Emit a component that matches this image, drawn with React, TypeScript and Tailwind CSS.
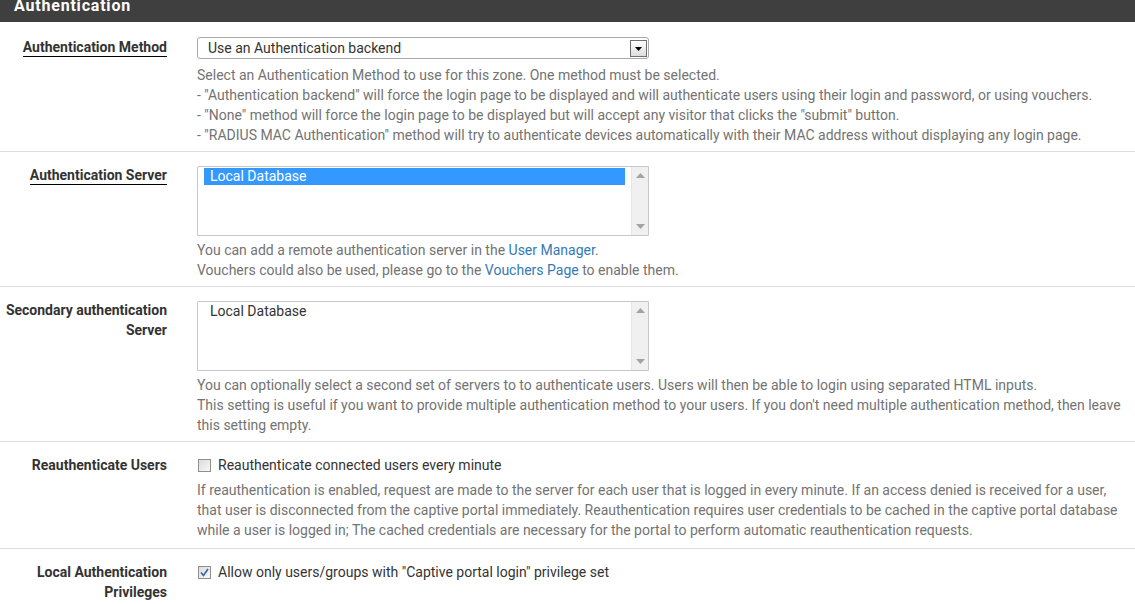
import React from "react";

const help = "text-[14px] leading-5 text-[#737373] whitespace-nowrap";
const link = "text-[#337ab7]";

function Label({ children, pt, underline }: { children: React.ReactNode; pt: string; underline?: boolean }) {
  return (
    <div className={`w-[167px] shrink-0 text-right text-[14px] leading-5 font-bold text-[#333] ${pt}`}>
      {underline ? <span className="border-b border-black pb-[1px]">{children}</span> : children}
    </div>
  );
}

function ScrollBar() {
  return (
    <div className="absolute right-0 top-0 bottom-0 w-[17px] bg-[#f0f0f0] border-l border-[#e6e6e6] flex flex-col justify-between items-center py-[6px]">
      <svg width="9" height="5" viewBox="0 0 9 5"><path d="M0 5 L4.5 0 L9 5 Z" fill="#a3a3a3" /></svg>
      <svg width="9" height="5" viewBox="0 0 9 5"><path d="M0 0 L4.5 5 L9 0 Z" fill="#a3a3a3" /></svg>
    </div>
  );
}

function ListBox({ selected }: { selected?: boolean }) {
  return (
    <div className="relative w-[452px] h-[70px] border border-[#c8c8c8] rounded-tl-[2px] bg-white">
      <div className="pl-[6px] pr-[23px] pt-[1px]">
        <div className={`h-[17px] leading-[17px] pl-[6px] text-[14px] ${selected ? "bg-[#3399ff] text-white" : "text-[#333]"}`}>
          Local Database
        </div>
      </div>
      <ScrollBar />
    </div>
  );
}

function CheckBox({ checked }: { checked?: boolean }) {
  return (
    <div className="w-[13px] h-[13px] border border-[#8f8f8f] bg-gradient-to-br from-[#dcdcdc] to-[#f8f8f8] flex items-center justify-center shrink-0">
      {checked && (
        <svg width="9" height="9" viewBox="0 0 9 9">
          <path d="M1 4.5 L3.5 7.5 L8 1" stroke="#3b5db5" strokeWidth="1.6" fill="none" />
        </svg>
      )}
    </div>
  );
}

export default function App() {
  return (
    <div className="w-[1135px] h-[604px] overflow-hidden bg-white" style={{ fontFamily: "Roboto, 'Liberation Sans', sans-serif" }}>
      <div className="h-[22px] bg-[#3f3f3f] pl-[14px] overflow-hidden">
        <div className="text-white font-bold text-[16px] leading-[16px] tracking-[0.05em] -mt-[2px]">Authentication</div>
      </div>

      {/* Row 1 */}
      <div className="flex border-b border-[#dddddd] pt-[15px] pb-[6px] pr-[15px]">
        <Label pt="" underline>Authentication Method</Label>
        <div className="ml-[30px] flex-1">
          <div className="relative w-[452px] h-[22px] border border-[#a9a9a9] rounded-[3px] bg-white">
            <div className="pl-[10px] text-[14px] leading-[20px] text-[#333]">Use an Authentication backend</div>
            <div className="absolute right-[1px] top-[2px] w-[17px] h-[17px] border border-[#707070] bg-gradient-to-b from-white to-[#dcdcdc] flex items-center justify-center">
              <svg width="7" height="4" viewBox="0 0 7 4"><path d="M0 0 L7 0 L3.5 4 Z" fill="#000" /></svg>
            </div>
          </div>
          <div className={`${help} mt-[6px]`}>
            <div>Select an Authentication Method to use for this zone. One method must be selected.</div>
            <div>- "Authentication backend" will force the login page to be displayed and will authenticate users using their login and password, or using vouchers.</div>
            <div>- "None" method will force the login page to be displayed but will accept any visitor that clicks the "submit" button.</div>
            <div>- "RADIUS MAC Authentication" method will try to authenticate devices automatically with their MAC address without displaying any login page.</div>
          </div>
        </div>
      </div>

      {/* Row 2 */}
      <div className="flex border-b border-[#dddddd] pt-[14px] pb-[6px] pr-[15px]">
        <Label pt="-mt-[1px]" underline>Authentication Server</Label>
        <div className="ml-[30px] flex-1">
          <ListBox selected />
          <div className={`${help} mt-[4px]`}>
            <div>You can add a remote authentication server in the <span className={link}>User Manager</span>.</div>
            <div>Vouchers could also be used, please go to the <span className={link}>Vouchers Page</span> to enable them.</div>
          </div>
        </div>
      </div>

      {/* Row 3 */}
      <div className="flex border-b border-[#dddddd] pt-[14px] pb-[6px] pr-[15px]">
        <Label pt="-mt-[1px]">Secondary authentication<br />Server</Label>
        <div className="ml-[30px] flex-1">
          <ListBox />
          <div className={`${help} mt-[4px]`}>
            <div>You can optionally select a second set of servers to to authenticate users. Users will then be able to login using separated HTML inputs.</div>
            <div>This setting is useful if you want to provide multiple authentication method to your users. If you don't need multiple authentication method, then leave</div>
            <div>this setting empty.</div>
          </div>
        </div>
      </div>

      {/* Row 4 */}
      <div className="flex border-b border-[#dddddd] pt-[13px] pb-[8px] pr-[15px]">
        <Label pt="">Reauthenticate Users</Label>
        <div className="ml-[30px] flex-1">
          <div className="flex items-center h-5 pl-[1px]">
            <CheckBox />
            <span className="ml-[7px] text-[14px] text-[#333]">Reauthenticate connected users every minute</span>
          </div>
          <div className={`${help} mt-[5px]`}>
            <div>If reauthentication is enabled, request are made to the server for each user that is logged in every minute. If an access denied is received for a user,</div>
            <div>that user is disconnected from the captive portal immediately. Reauthentication requires user credentials to be cached in the captive portal database</div>
            <div>while a user is logged in; The cached credentials are necessary for the portal to perform automatic reauthentication requests.</div>
          </div>
        </div>
      </div>

      {/* Row 5 */}
      <div className="flex pt-[13px] pr-[15px]">
        <Label pt="">Local Authentication<br />Privileges</Label>
        <div className="ml-[30px] flex-1">
          <div className="flex items-center h-5 pl-[1px]">
            <CheckBox checked />
            <span className="ml-[7px] text-[14px] text-[#333]">Allow only users/groups with "Captive portal login" privilege set</span>
          </div>
        </div>
      </div>
    </div>
  );
}
